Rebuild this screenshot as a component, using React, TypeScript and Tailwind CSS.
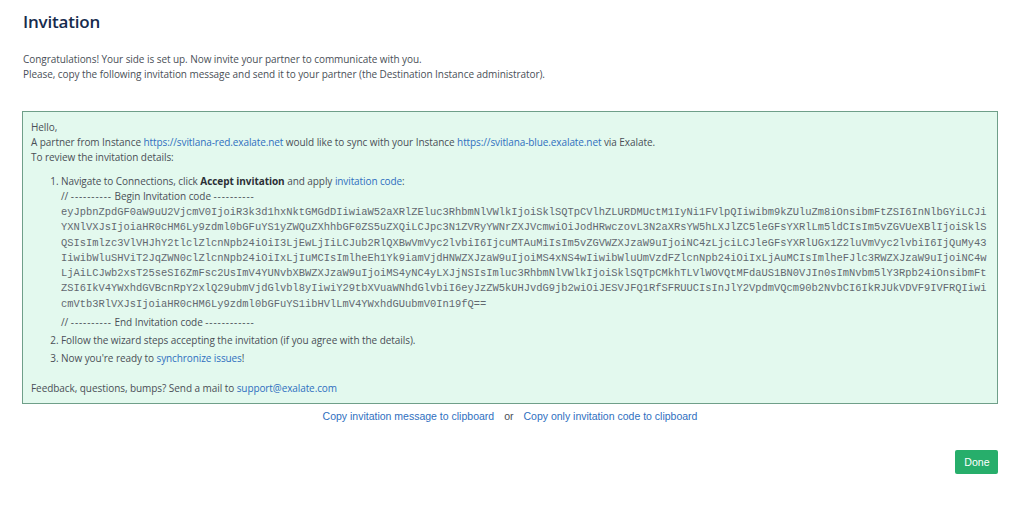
const code = [
  "eyJpbnZpdGF0aW9uU2VjcmV0IjoiR3k3d1hxNktGMGdDIiwiaW52aXRlZEluc3RhbmNlVWlkIjoiSklSQTpCVlhZLURDMUctM1IyNi1FVlpQIiwibm9kZUluZm8iOnsibmFtZSI6InNlbGYiLCJi",
  "YXNlVXJsIjoiaHR0cHM6Ly9zdml0bGFuYS1yZWQuZXhhbGF0ZS5uZXQiLCJpc3N1ZVRyYWNrZXJVcmwiOiJodHRwczovL3N2aXRsYW5hLXJlZC5leGFsYXRlLm5ldCIsIm5vZGVUeXBlIjoiSklS",
  "QSIsImlzc3VlVHJhY2tlclZlcnNpb24iOiI3LjEwLjIiLCJub2RlQXBwVmVyc2lvbiI6IjcuMTAuMiIsIm5vZGVWZXJzaW9uIjoiNC4zLjciLCJleGFsYXRlUGx1Z2luVmVyc2lvbiI6IjQuMy43",
  "IiwibWluSHViT2JqZWN0clZlcnNpb24iOiIxLjIuMCIsImlheEh1Yk9iamVjdHNWZXJzaW9uIjoiMS4xNS4wIiwibWluUmVzdFZlcnNpb24iOiIxLjAuMCIsImlheFJlc3RWZXJzaW9uIjoiNC4w",
  "LjAiLCJwb2xsT25seSI6ZmFsc2UsImV4YUNvbXBWZXJzaW9uIjoiMS4yNC4yLXJjNSIsImluc3RhbmNlVWlkIjoiSklSQTpCMkhTLVlWOVQtMFdaUS1BN0VJIn0sImNvbm5lY3Rpb24iOnsibmFt",
  "ZSI6IkV4YWxhdGVBcnRpY2xlQ29ubmVjdGlvbl8yIiwiY29tbXVuaWNhdGlvbiI6eyJzZW5kUHJvdG9jb2wiOiJESVJFQ1RfSFRUUCIsInJlY2VpdmVQcm90b2NvbCI6IkRJUkVDVF9IVFRQIiwi",
  "cmVtb3RlVXJsIjoiaHR0cHM6Ly9zdml0bGFuYS1ibHVlLmV4YWxhdGUubmV0In19fQ==",
];

function A({ children }: { children: React.ReactNode }) {
  return <a className="text-[#2f6fc0] tracking-[-0.1px]">{children}</a>;
}

function D({ children }: { children: React.ReactNode }) {
  return <span className="tracking-[0.9px]">{children}</span>;
}

export default function App() {
  return (
    <div className="w-[1024px] h-[510px] overflow-hidden bg-white pl-[22px] pr-[26px] pt-[11px] font-['Open_Sans','Liberation_Sans',sans-serif] text-[10px] tracking-[-0.06px] leading-[15px] text-[#4a4f57]">
      <h1 className="text-[17px] tracking-[-0.2px] leading-[21px] font-semibold text-[#172b4d] pl-px">Invitation</h1>
      <div className="mt-[20px] pl-px">
        <p>Congratulations! Your side is set up. Now invite your partner to communicate with you.</p>
        <p>Please, copy the following invitation message and send it to your partner (the Destination Instance administrator).</p>
      </div>
      <div className="mt-[29px] h-[293px] border border-[#6f9f89] bg-[#e3f9ee] pl-2 pt-2">
        <p>Hello,</p>
        <p>
          A partner from Instance <A>https://svitlana-red.exalate.net</A> would like to sync with your Instance{" "}
          <A>https://svitlana-blue.exalate.net</A> via Exalate.
        </p>
        <p>To review the invitation details:</p>
        <ol className="mt-[9px] pl-[30px] list-decimal">
          <li>
            Navigate to Connections, click <b className="font-bold text-[#2b2f36]">Accept invitation</b> and apply{" "}
            <A>invitation code</A>:
            <div>// <D>----------</D> Begin Invitation code <D>----------</D></div>
            <div className="font-['Liberation_Mono',monospace] text-[10.43px] tracking-normal leading-[15.3px] whitespace-nowrap mt-[1px] text-[#626870]">
              {code.map((l) => (
                <div key={l}>{l}</div>
              ))}
            </div>
            <div className="mt-[3px]">// <D>----------</D> End Invitation code <D>------------</D></div>
          </li>
          <li className="mt-[3px]">Follow the wizard steps accepting the invitation (if you agree with the details).</li>
          <li className="mt-[3px]">
            Now you're ready to <A>synchronize issues</A>!
          </li>
        </ol>
        <p className="mt-[15px]">
          Feedback, questions, bumps? Send a mail to <A>support@exalate.com</A>
        </p>
      </div>
      <div className="mt-[5px] flex justify-center gap-[10px] font-['Liberation_Sans',sans-serif] tracking-normal text-[10.5px] leading-[15px]">
        <a className="text-[#2f6fc0]">Copy invitation message to clipboard</a>
        <span className="text-[#4a4f57]">or</span>
        <a className="text-[#2f6fc0]">Copy only invitation code to clipboard</a>
      </div>
      <div className="mt-[26px] flex justify-end">
        <button className="w-[43px] h-[24px] rounded-[2px] bg-[#27ae6b] text-white text-[10.6px] tracking-normal pl-px font-['Liberation_Sans',sans-serif]">Done</button>
      </div>
    </div>
  );
}
